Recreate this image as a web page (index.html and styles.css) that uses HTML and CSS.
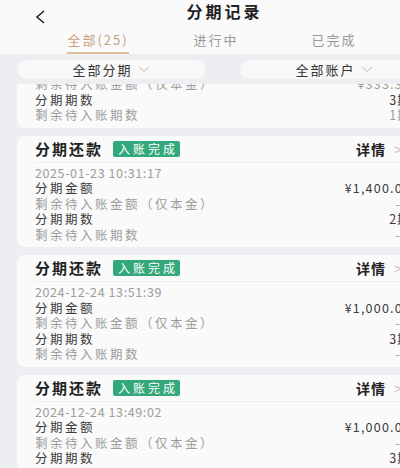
FILE: index.html
```html
<!DOCTYPE html>
<html>
<head>
    <meta charset="UTF-8">
    <title>分期记录</title>
    <link rel="stylesheet" href="styles.css">
</head>
<body>
    <div class="page">
        <!-- Title bar -->
        <div class="title-bar">
            <span class="back">
                <svg width="14" height="14" viewBox="0 0 14 14"><polyline points="10,1 3,7 10,13" fill="none" stroke="#222" stroke-width="1.6"/></svg>
            </span>
            <span class="title">分期记录</span>
        </div>

        <!-- Tabs -->
        <div class="tabs">
            <div class="tab active"><span>全部(25)</span></div>
            <div class="tab"><span>进行中</span></div>
            <div class="tab"><span>已完成</span></div>
        </div>

        <!-- Filters -->
        <div class="filters">
            <div class="pill">全部分期
                <svg width="12" height="7" viewBox="0 0 12 7"><polyline points="1,1 6,5.5 11,1" fill="none" stroke="#bbb" stroke-width="1"/></svg>
            </div>
            <div class="pill">全部账户
                <svg width="12" height="7" viewBox="0 0 12 7"><polyline points="1,1 6,5.5 11,1" fill="none" stroke="#bbb" stroke-width="1"/></svg>
            </div>
        </div>

        <!-- Record list -->
        <div class="list-wrap">
            <div class="list">
                <div class="card">
                    <div class="card-head">
                        <span class="card-title">分期还款</span>
                        <span class="badge">入账完成</span>
                        <span class="detail">详情 <i>&gt;</i></span>
                    </div>
                    <div class="card-body">
                        <div class="row muted"><span class="date">2025-02-10 09:12:44</span></div>
                        <div class="row"><span>分期金额</span><span class="val">¥1,000.00</span></div>
                        <div class="row muted"><span>剩余待入账金额（仅本金）</span><span class="val">¥333.33</span></div>
                        <div class="row"><span>分期期数</span><span class="val">3期</span></div>
                        <div class="row muted"><span>剩余待入账期数</span><span class="val">1期</span></div>
                    </div>
                </div>

                <div class="card">
                    <div class="card-head">
                        <span class="card-title">分期还款</span>
                        <span class="badge">入账完成</span>
                        <span class="detail">详情 <i>&gt;</i></span>
                    </div>
                    <div class="card-body">
                        <div class="row muted"><span class="date">2025-01-23 10:31:17</span></div>
                        <div class="row"><span>分期金额</span><span class="val">¥1,400.00</span></div>
                        <div class="row muted"><span>剩余待入账金额（仅本金）</span><span class="val dash">-</span></div>
                        <div class="row"><span>分期期数</span><span class="val">2期</span></div>
                        <div class="row muted"><span>剩余待入账期数</span><span class="val dash">-</span></div>
                    </div>
                </div>

                <div class="card">
                    <div class="card-head">
                        <span class="card-title">分期还款</span>
                        <span class="badge">入账完成</span>
                        <span class="detail">详情 <i>&gt;</i></span>
                    </div>
                    <div class="card-body">
                        <div class="row muted"><span class="date">2024-12-24 13:51:39</span></div>
                        <div class="row"><span>分期金额</span><span class="val">¥1,000.00</span></div>
                        <div class="row muted"><span>剩余待入账金额（仅本金）</span><span class="val dash">-</span></div>
                        <div class="row"><span>分期期数</span><span class="val">3期</span></div>
                        <div class="row muted"><span>剩余待入账期数</span><span class="val dash">-</span></div>
                    </div>
                </div>

                <div class="card">
                    <div class="card-head">
                        <span class="card-title">分期还款</span>
                        <span class="badge">入账完成</span>
                        <span class="detail">详情 <i>&gt;</i></span>
                    </div>
                    <div class="card-body">
                        <div class="row muted"><span class="date">2024-12-24 13:49:02</span></div>
                        <div class="row"><span>分期金额</span><span class="val">¥1,000.00</span></div>
                        <div class="row muted"><span>剩余待入账金额（仅本金）</span><span class="val dash">-</span></div>
                        <div class="row"><span>分期期数</span><span class="val">3期</span></div>
                        <div class="row muted"><span>剩余待入账期数</span><span class="val dash">-</span></div>
                    </div>
                </div>
            </div>
        </div>
    </div>
</body>
</html>
```

FILE: styles.css
```css
body {
    margin: 0;
    width: 400px;
    height: 468px;
    overflow: hidden;
    background-color: #eceef1;
    font-family: "Noto Sans CJK SC", "Noto Sans", sans-serif;
    color: #333;
}

.page {
    width: 446px;
    height: 468px;
    display: flex;
    flex-direction: column;
}

/* Title bar */
.title-bar {
    height: 27px;
    box-sizing: border-box;
    padding-bottom: 6px;
    background-color: #fafafa;
    display: flex;
    align-items: center;
    justify-content: center;
    position: relative;
}

.back {
    position: absolute;
    left: 34px;
    top: 5px;
}

.title {
    font-size: 16px;
    line-height: 18px;
    font-weight: bold;
    letter-spacing: 3px;
    color: #222;
    margin-left: 3px;
}

/* Tabs */
.tabs {
    height: 27px;
    background-color: #fafafa;
    display: flex;
    padding-left: 39px;
}

.tab {
    width: 118px;
    display: flex;
    justify-content: center;
}

.tab span {
    display: block;
    font-size: 13px;
    letter-spacing: 2px;
    color: #999;
    line-height: 25px;
    border-bottom: 2px solid transparent;
}

.tab.active span {
    color: #c9a27e;
    border-bottom-color: #dcbf9f;
}

/* Filters */
.filters {
    height: 30px;
    display: flex;
    align-items: center;
    gap: 35px;
    padding-left: 17px;
}

.pill {
    width: 188px;
    height: 19px;
    background-color: #f8f8f9;
    border-radius: 10px;
    display: flex;
    align-items: center;
    justify-content: center;
    gap: 5px;
    font-size: 13px;
    line-height: 19px;
    letter-spacing: 2px;
    color: #333;
}

/* List */
.list-wrap {
    flex: 1;
    overflow: hidden;
}

.list {
    margin-top: -68px;
    display: flex;
    flex-direction: column;
    gap: 8px;
}

.card {
    margin-left: 17px;
    width: 412px;
    background-color: #fafafa;
    border-radius: 8px;
    padding: 0 18px 5px 18px;
    box-sizing: border-box;
}

.card-head {
    height: 26px;
    display: flex;
    align-items: center;
    border-bottom: 1px solid #ececec;
}

.card-title {
    font-size: 15px;
    line-height: 18px;
    font-weight: bold;
    letter-spacing: 2px;
    color: #222;
}

.badge {
    margin-left: 10px;
    background-color: #33a97b;
    color: #fff;
    font-size: 12px;
    letter-spacing: 3px;
    line-height: 16px;
    padding: 0 2px 0 5px;
    border-radius: 2px;
}

.detail {
    margin-left: auto;
    margin-right: 8px;
    font-size: 14px;
    line-height: 18px;
    font-weight: bold;
    letter-spacing: 1px;
    color: #222;
}

.detail i {
    font-style: normal;
    font-weight: normal;
    color: #bbb;
    margin-left: 4px;
}

.card-body {
    padding-top: 2px;
}

.row {
    height: 15.5px;
    line-height: 15.5px;
    display: flex;
    align-items: center;
    justify-content: space-between;
    font-size: 12.5px;
    letter-spacing: 2.5px;
    color: #3a3a3a;
}

.row.muted {
    color: #9d9d9d;
}

.date {
    letter-spacing: 0.6px;
}

.val {
    letter-spacing: 1.2px;
}

.val.dash {
    margin-right: 10px;
}
```
